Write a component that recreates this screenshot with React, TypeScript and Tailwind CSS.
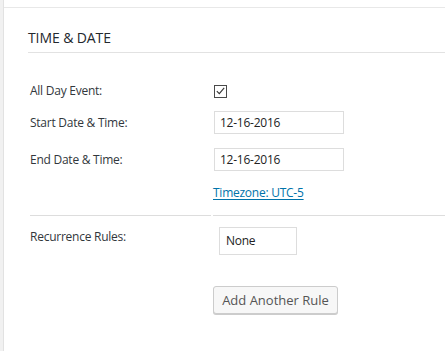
import React from 'react';

const font = { fontFamily: '"Open Sans", "Noto Sans", sans-serif' };

const CheckIcon: React.FC = () => (
  <svg width="9" height="8" viewBox="0 0 9 8" fill="none">
    <path d="M0.8 4.2 L3.3 6.6 L8.2 0.9" stroke="#333" strokeWidth="1.1" />
  </svg>
);

export default function App() {
  return (
    <div className="flex w-[445px] h-[351px] bg-white text-[#32373c]" style={font}>
      <div className="w-[3px] bg-[#f1f1f1] border-r border-[#e2e2e2] box-content" />
      <div className="flex-1 flex flex-col">
        <div className="h-[7px]" />
        <div className="border-t border-[#e8e8e8] pl-[24px]">
          <h2 className="pt-[20px] pb-[4px] text-[14px] leading-[20px] text-[#23282d] border-b border-[#e2e2e2] tracking-[-0.1px]">
            TIME &amp; DATE
          </h2>

          <div className="pl-[2px] text-[12px] leading-[16px] tracking-[-0.25px]">
            <div className="flex items-center mt-[31px] h-[14px]">
              <div className="w-[184px]">All Day Event:</div>
              <div className="w-[13px] h-[13px] border border-[#4a4a4a] flex items-center justify-center">
                <CheckIcon />
              </div>
            </div>

            <div className="flex items-center mt-[13px] h-[23px]">
              <div className="w-[184px]">Start Date &amp; Time:</div>
              <div className="w-[130px] h-[23px] border border-[#dddddd] pl-[5px] flex items-center text-[#222]">
                12-16-2016
              </div>
            </div>

            <div className="flex items-center mt-[14px] h-[23px]">
              <div className="w-[184px]">End Date &amp; Time:</div>
              <div className="w-[130px] h-[23px] border border-[#dddddd] pl-[5px] flex items-center text-[#222]">
                12-16-2016
              </div>
            </div>

            <div className="flex items-center mt-[14px] h-[16px]">
              <div className="w-[183px]" />
              <a href="#" className="text-[#0073aa] underline underline-offset-2">
                Timezone: UTC-5
              </a>
            </div>

            <div className="flex gap-[2px] mt-[14px]">
              <div className="w-[181px] border-t border-[#dddddd]" />
              <div className="flex-1 border-t border-[#dddddd]" />
            </div>

            <div className="flex mt-[11px]">
              <div className="w-[189px] pt-[2px]">Recurrence Rules:</div>
              <div className="w-[78px] h-[28px] border border-[#dddddd] pl-[6px] flex items-center text-[#222]">
                None
              </div>
            </div>

            <div className="flex mt-[31px]">
              <div className="w-[183px]" />
              <button className="w-[125px] h-[28px] bg-[#f7f7f7] border border-[#cccccc] rounded-[3px] shadow-[0_1px_0_#cccccc] text-[13px] text-[#555] tracking-[0px]">
                Add Another Rule
              </button>
            </div>
          </div>
        </div>
      </div>
    </div>
  );
}
